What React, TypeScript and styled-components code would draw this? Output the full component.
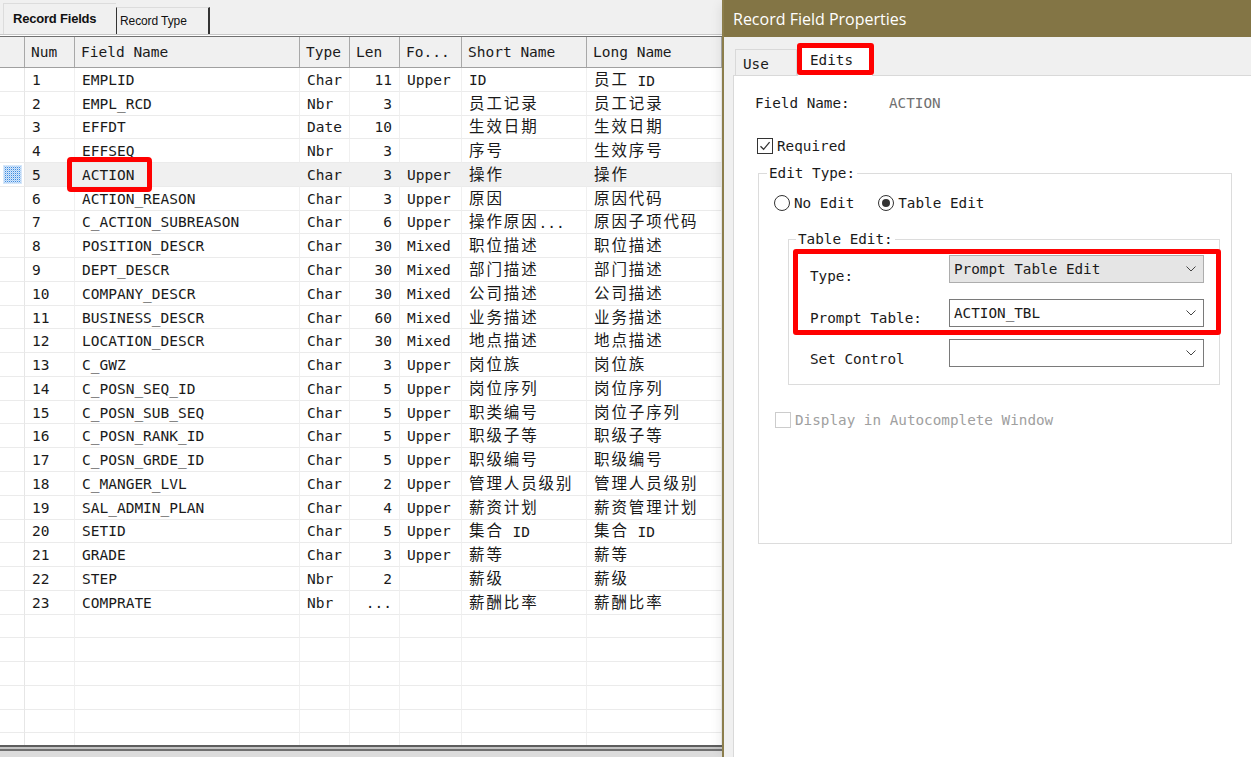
import React from 'react';
import styled, { createGlobalStyle } from 'styled-components';

const MONO = `"DejaVu Sans Mono", "Noto Sans CJK SC", monospace`;
const COLS = '25px 50px 225px 50px 50px 62px 125px 135px';

const GlobalStyle = createGlobalStyle`
  html, body { margin: 0; padding: 0; }
  body {
    width: 1251px; height: 757px; overflow: hidden;
    background: #f0f0f0; font-family: ${MONO}; color: #1a1a1a;
  }
  * { box-sizing: border-box; }
`;

const Screen = styled.div`
  display: flex;
  width: 1251px;
  height: 757px;
  overflow: hidden;
`;

/* ---------- left pane ---------- */
const LeftPane = styled.div`
  width: 722px;
  flex: none;
  display: flex;
  flex-direction: column;
  background: #fff;
  overflow: hidden;
`;

const TabStrip = styled.div`
  height: 35px;
  flex: none;
  display: flex;
  align-items: flex-end;
  padding-left: 3px;
  background: #f0f0f0;
  border-bottom: 1px solid #c8c8c8;
`;

const StripTab = styled.div<{ $active?: boolean }>`
  height: ${p => (p.$active ? 31 : 27)}px;
  width: ${p => (p.$active ? 113 : 94)}px;
  display: flex;
  align-items: center;
  padding-left: ${p => (p.$active ? 9 : 3)}px;
  padding-bottom: 1px;
  font-family: "Liberation Sans", Arial, sans-serif;
  font-size: ${p => (p.$active ? 13 : 12)}px;
  font-weight: ${p => (p.$active ? 700 : 400)};
  letter-spacing: ${p => (p.$active ? '-0.2px' : '-0.1px')};
  color: #111;
  background: #f0f0f0;
  border-top: 1px solid #dcdcdc;
  border-left: 1px solid ${p => (p.$active ? '#dcdcdc' : '#333')};
  border-right: ${p => (p.$active ? 'none' : '2px solid #333')};
`;

const HeaderRow = styled.div`
  flex: none;
  display: grid;
  grid-template-columns: ${COLS};
  height: 32px;
  margin-top: 1px;
  border-top: 1px solid #707070;
  border-bottom: 1px solid #a0a0a0;
  background: #f0f0f0;
`;

const HeaderCell = styled.div`
  display: flex;
  align-items: center;
  padding-left: 6px;
  border-right: 1px solid #a8a8a8;
  font-size: 14.5px;
  white-space: nowrap;
  overflow: hidden;
`;

const Rows = styled.div`
  flex: 1;
  min-height: 0;
  overflow: hidden;
  display: flex;
  flex-direction: column;
`;

const Row = styled.div`
  flex: none;
  display: grid;
  grid-template-columns: ${COLS};
  height: 23.77px;
`;

const SelectorCell = styled.div`
  display: flex;
  align-items: center;
  justify-content: center;
  border-right: 1px solid #e6e6e6;
  border-bottom: 1px solid #ebebeb;
  background: #fff;
`;

const Cell = styled.div<{ $right?: boolean; $selected?: boolean; $marked?: boolean }>`
  display: flex;
  align-items: center;
  justify-content: ${p => (p.$right ? 'flex-end' : 'flex-start')};
  padding: 1px 7px 0;
  border-right: 1px solid #f0f0f0;
  border-bottom: 1px solid #ebebeb;
  background: ${p => (p.$selected ? '#f0f0f0' : '#fff')};
  font-size: 14.5px;
  white-space: pre;
  position: ${p => (p.$marked ? 'relative' : 'static')};
`;

const CellText = styled.span`
  white-space: pre;
`;

const CellMark = styled.span`
  position: absolute;
  left: -8px;
  top: -6px;
  width: 85px;
  height: 35px;
  border: 5px solid #ff0000;
  border-radius: 4px;
  pointer-events: none;
`;

const Wide = styled.span`
  font-family: "Noto Sans CJK SC", sans-serif;
  font-size: 15.5px;
  line-height: 1;
  letter-spacing: 1.9px;
  vertical-align: 1px;
`;

const BottomEdge = styled.div`
  height: 12px;
  flex: none;
  border-top: 2px solid #5d5d5d;
  background: linear-gradient(to bottom, #c4c4c4 0 2px, #707070 2px 4px, #dcdcdc 4px);
`;

/* ---------- dialog ---------- */
const Dialog = styled.section`
  flex: 1;
  min-width: 0;
  display: flex;
  flex-direction: column;
  border-left: 2px solid #8c7e4c;
  background: #f0f0f0;
  position: relative;
  z-index: 2;
  box-shadow: -6px 0 10px -4px rgba(0, 0, 0, 0.08);
`;

const TitleBar = styled.header`
  height: 37px;
  flex: none;
  display: flex;
  align-items: center;
  padding-left: 9px;
  background: #837545;
  color: #fff;
  font-family: "Open Sans", "Noto Sans", sans-serif;
  font-size: 16px;
`;

const DialogBody = styled.div`
  flex: 1;
  min-height: 0;
  display: flex;
  flex-direction: column;
  padding-left: 9px;
  font-size: 14.3px;
`;

const TabsRow = styled.div`
  height: 38px;
  flex: none;
  display: flex;
  align-items: flex-end;
  padding-left: 2px;
  position: relative;
  z-index: 1;
`;

const PageTab = styled.div<{ $active?: boolean }>`
  position: relative;
  width: ${p => (p.$active ? 76 : 62)}px;
  height: ${p => (p.$active ? 31 : 26)}px;
  margin-bottom: ${p => (p.$active ? -1 : 0)}px;
  display: flex;
  align-items: ${p => (p.$active ? 'flex-start' : 'center')};
  padding-left: ${p => (p.$active ? 12 : 7)}px;
  padding-top: ${p => (p.$active ? 5 : 2)}px;
  line-height: 18px;
  background: ${p => (p.$active ? '#fff' : '#f0f0f0')};
  border: 1px solid #d9d9d9;
  border-bottom: none;
`;

const TabMark = styled.span`
  position: absolute;
  left: -1px;
  top: -3px;
  width: 77px;
  height: 32px;
  border: 5px solid #ff0000;
  border-radius: 3px;
  pointer-events: none;
`;

const TabPage = styled.div`
  flex: 1;
  min-height: 0;
  display: flex;
  flex-direction: column;
  align-items: flex-start;
  background: #fff;
  border: 1px solid #d9d9d9;
  border-right: none;
  border-bottom: none;
`;

const InfoRow = styled.div`
  margin: 18px 0 0 21px;
  height: 18px;
  display: flex;
  align-items: center;
`;

const InfoLabel = styled.span`
  width: 134px;
`;

const InfoValue = styled.span`
  color: #707070;
`;

const CheckRow = styled.label<{ $mt: number; $ml: number; $disabled?: boolean }>`
  margin: ${p => p.$mt}px 0 0 ${p => p.$ml}px;
  height: 16px;
  display: flex;
  align-items: center;
  gap: 4px;
  color: ${p => (p.$disabled ? '#a0a0a0' : 'inherit')};
`;

const Box = styled.span<{ $disabled?: boolean }>`
  width: 16px;
  height: 16px;
  flex: none;
  display: flex;
  align-items: center;
  justify-content: center;
  border: 1px solid ${p => (p.$disabled ? '#cccccc' : '#333')};
  background: #fff;
`;

const Group = styled.fieldset<{ $w: number; $mt: number; $ml: number; $pt: number; $pb: number }>`
  width: ${p => p.$w}px;
  min-width: 0;
  margin: ${p => p.$mt}px 0 0 ${p => p.$ml}px;
  padding: ${p => p.$pt}px 0 ${p => p.$pb}px 0;
  border: 1px solid #dcdcdc;
  display: flex;
  flex-direction: column;
  align-items: flex-start;
`;

const Legend = styled.legend<{ $ml: number }>`
  margin-left: ${p => p.$ml}px;
  padding: 0 2px;
  height: 18px;
  line-height: 18px;
`;

const RadioRow = styled.div`
  margin: 12px 0 0 15px;
  height: 18px;
  display: flex;
  align-items: center;
  gap: 24px;
`;

const RadioItem = styled.label`
  display: flex;
  align-items: center;
  gap: 4px;
`;

const Radio = styled.span<{ $checked?: boolean }>`
  width: 16px;
  height: 16px;
  flex: none;
  border-radius: 50%;
  border: 1px solid #333;
  background: #fff;
  display: flex;
  align-items: center;
  justify-content: center;
  &::after {
    content: '';
    width: 8px;
    height: 8px;
    border-radius: 50%;
    background: #333;
    display: ${p => (p.$checked ? 'block' : 'none')};
  }
`;

const FieldStack = styled.div`
  margin-left: 21px;
  display: flex;
  flex-direction: column;
  position: relative;
`;

const HighlightBlock = styled.div`
  position: relative;
  display: flex;
  flex-direction: column;
`;

const BlockMark = styled.span`
  position: absolute;
  left: -17px;
  right: -17px;
  top: -6px;
  bottom: -8px;
  border: 5px solid #ff0000;
  border-radius: 3px;
  pointer-events: none;
`;

const FormRow = styled.div<{ $mt: number; $shift: number }>`
  margin-top: ${p => p.$mt}px;
  height: 28px;
  display: flex;
  align-items: flex-end;
  & > span {
    margin-bottom: ${p => p.$shift}px;
  }
`;

const FormLabel = styled.span`
  width: 139px;
  height: 18px;
  line-height: 18px;
  flex: none;
`;

const Combo = styled.div<{ $readonly?: boolean }>`
  width: 255px;
  height: 28px;
  flex: none;
  display: flex;
  align-items: center;
  justify-content: space-between;
  padding: 0 7px 0 4px;
  border: 1px solid ${p => (p.$readonly ? '#adadad' : '#7a7a7a')};
  background: ${p => (p.$readonly ? '#e5e5e5' : '#fff')};
`;

/* ---------- data ---------- */
type Field = [string, string, string, string, string, string, string];

const FIELDS: Field[] = [
  ['1', 'EMPLID', 'Char', '11', 'Upper', 'ID', '员工 ID'],
  ['2', 'EMPL_RCD', 'Nbr', '3', '', '员工记录', '员工记录'],
  ['3', 'EFFDT', 'Date', '10', '', '生效日期', '生效日期'],
  ['4', 'EFFSEQ', 'Nbr', '3', '', '序号', '生效序号'],
  ['5', 'ACTION', 'Char', '3', 'Upper', '操作', '操作'],
  ['6', 'ACTION_REASON', 'Char', '3', 'Upper', '原因', '原因代码'],
  ['7', 'C_ACTION_SUBREASON', 'Char', '6', 'Upper', '操作原因...', '原因子项代码'],
  ['8', 'POSITION_DESCR', 'Char', '30', 'Mixed', '职位描述', '职位描述'],
  ['9', 'DEPT_DESCR', 'Char', '30', 'Mixed', '部门描述', '部门描述'],
  ['10', 'COMPANY_DESCR', 'Char', '30', 'Mixed', '公司描述', '公司描述'],
  ['11', 'BUSINESS_DESCR', 'Char', '60', 'Mixed', '业务描述', '业务描述'],
  ['12', 'LOCATION_DESCR', 'Char', '30', 'Mixed', '地点描述', '地点描述'],
  ['13', 'C_GWZ', 'Char', '3', 'Upper', '岗位族', '岗位族'],
  ['14', 'C_POSN_SEQ_ID', 'Char', '5', 'Upper', '岗位序列', '岗位序列'],
  ['15', 'C_POSN_SUB_SEQ', 'Char', '5', 'Upper', '职类编号', '岗位子序列'],
  ['16', 'C_POSN_RANK_ID', 'Char', '5', 'Upper', '职级子等', '职级子等'],
  ['17', 'C_POSN_GRDE_ID', 'Char', '5', 'Upper', '职级编号', '职级编号'],
  ['18', 'C_MANGER_LVL', 'Char', '2', 'Upper', '管理人员级别', '管理人员级别'],
  ['19', 'SAL_ADMIN_PLAN', 'Char', '4', 'Upper', '薪资计划', '薪资管理计划'],
  ['20', 'SETID', 'Char', '5', 'Upper', '集合 ID', '集合 ID'],
  ['21', 'GRADE', 'Char', '3', 'Upper', '薪等', '薪等'],
  ['22', 'STEP', 'Nbr', '2', '', '薪级', '薪级'],
  ['23', 'COMPRATE', 'Nbr', '...', '', '薪酬比率', '薪酬比率'],
];

const HEADERS = ['', 'Num', 'Field Name', 'Type', 'Len', 'Fo...', 'Short Name', 'Long Name'];

const CJK_RE = /([\u3400-\u9fff\uff00-\uffef]+)/;
function mono(text: string) {
  return (
    <CellText>
      {text
        .split(CJK_RE)
        .filter(Boolean)
        .map((part, i) =>
          CJK_RE.test(part) ? <Wide key={i}>{part}</Wide> : <React.Fragment key={i}>{part}</React.Fragment>
        )}
    </CellText>
  );
}

const SelectorIcon = () => (
  <svg width="19" height="19" viewBox="0 0 19 19">
    <defs>
      <pattern id="dots" width="2" height="2" patternUnits="userSpaceOnUse">
        <rect width="1" height="1" fill="#3d8be0" />
        <rect x="1" y="1" width="1" height="1" fill="#a9cdf3" />
      </pattern>
    </defs>
    <rect x="0" y="0" width="19" height="19" fill="#d6e7fa" />
    <rect x="1" y="1" width="17" height="17" fill="url(#dots)" />
  </svg>
);

const Chevron = () => (
  <svg width="10" height="6" viewBox="0 0 10 6">
    <path d="M0.5 0.5 L5 5 L9.5 0.5" fill="none" stroke="#444" strokeWidth="1" />
  </svg>
);

const Check = () => (
  <svg width="14" height="14" viewBox="0 0 14 14">
    <path d="M2.5 7.2 L5.6 10.3 L11.6 3.2" fill="none" stroke="#333" strokeWidth="1.3" />
  </svg>
);

const EMPTY_ROWS = 6;

export default function App() {
  return (
    <>
      <GlobalStyle />
      <Screen>
        <LeftPane>
          <TabStrip>
            <StripTab $active>Record Fields</StripTab>
            <StripTab>Record Type</StripTab>
          </TabStrip>
          <HeaderRow>
            {HEADERS.map((h, i) => (
              <HeaderCell key={i}>{h}</HeaderCell>
            ))}
          </HeaderRow>
          <Rows>
            {FIELDS.map(f => {
              const sel = f[1] === 'ACTION';
              return (
                <Row key={f[0]}>
                  <SelectorCell>{sel && <SelectorIcon />}</SelectorCell>
                  <Cell $selected={sel}>{f[0]}</Cell>
                  <Cell $selected={sel} $marked={sel}>
                    {f[1]}
                    {sel && <CellMark />}
                  </Cell>
                  <Cell $selected={sel}>{f[2]}</Cell>
                  <Cell $selected={sel} $right>{f[3]}</Cell>
                  <Cell $selected={sel}>{f[4]}</Cell>
                  <Cell $selected={sel}>{mono(f[5])}</Cell>
                  <Cell $selected={sel}>{mono(f[6])}</Cell>
                </Row>
              );
            })}
            {Array.from({ length: EMPTY_ROWS }).map((_, r) => (
              <Row key={`e${r}`}>
                <SelectorCell />
                {Array.from({ length: 7 }).map((__, c) => (
                  <Cell key={c} />
                ))}
              </Row>
            ))}
          </Rows>
          <BottomEdge />
        </LeftPane>

        <Dialog>
          <TitleBar>Record Field Properties</TitleBar>
          <DialogBody>
            <TabsRow>
              <PageTab>Use</PageTab>
              <PageTab $active>
                Edits
                <TabMark />
              </PageTab>
            </TabsRow>
            <TabPage>
              <InfoRow>
                <InfoLabel>Field Name:</InfoLabel>
                <InfoValue>ACTION</InfoValue>
              </InfoRow>
              <CheckRow $mt={26} $ml={23}>
                <Box>
                  <Check />
                </Box>
                Required
              </CheckRow>
              <Group $w={474} $mt={10} $ml={24} $pt={0} $pb={115}>
                <Legend $ml={8}>Edit Type:</Legend>
                <RadioRow>
                  <RadioItem>
                    <Radio />
                    No Edit
                  </RadioItem>
                  <RadioItem>
                    <Radio $checked />
                    Table Edit
                  </RadioItem>
                </RadioRow>
                <Group $w={432} $mt={18} $ml={29} $pt={7} $pb={17}>
                  <Legend $ml={7}>Table Edit:</Legend>
                  <FieldStack>
                    <HighlightBlock>
                      <FormRow $mt={0} $shift={-2}>
                        <FormLabel>Type:</FormLabel>
                        <Combo $readonly>
                          Prompt Table Edit
                          <Chevron />
                        </Combo>
                      </FormRow>
                      <FormRow $mt={16} $shift={0}>
                        <FormLabel>Prompt Table:</FormLabel>
                        <Combo>
                          ACTION_TBL
                          <Chevron />
                        </Combo>
                      </FormRow>
                      <BlockMark />
                    </HighlightBlock>
                    <FormRow $mt={12} $shift={-1}>
                      <FormLabel>Set Control</FormLabel>
                      <Combo>
                        <span />
                        <Chevron />
                      </Combo>
                    </FormRow>
                  </FieldStack>
                </Group>
                <CheckRow $mt={27} $ml={16} $disabled>
                  <Box $disabled />
                  Display in Autocomplete Window
                </CheckRow>
              </Group>
            </TabPage>
          </DialogBody>
        </Dialog>
      </Screen>
    </>
  );
}
